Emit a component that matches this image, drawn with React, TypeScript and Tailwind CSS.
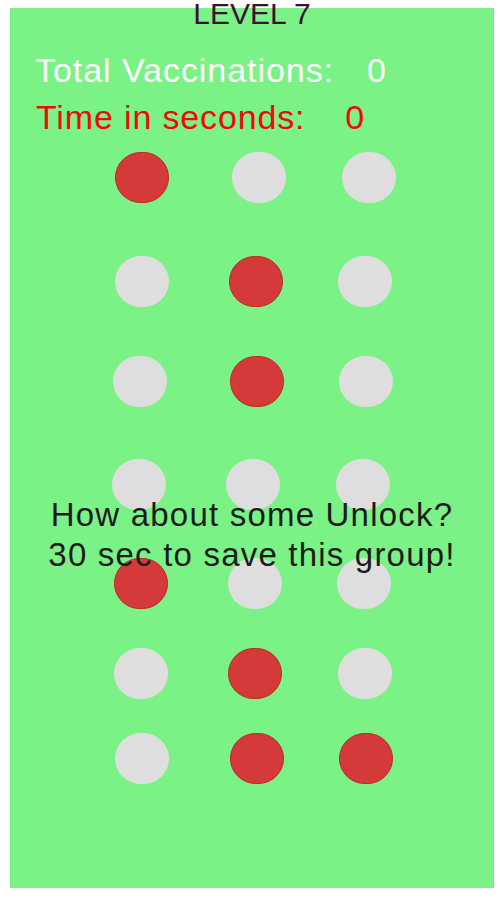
import React from "react";

type Cell = { ml: string; red: boolean };
type Row = { mt: string; cells: Cell[] };

const rows: Row[] = [
  { mt: "mt-[18px]", cells: [{ ml: "ml-[105px]", red: true }, { ml: "ml-[63px]", red: false }, { ml: "ml-[56px]", red: false }] },
  { mt: "mt-[53px]", cells: [{ ml: "ml-[105px]", red: false }, { ml: "ml-[60px]", red: true }, { ml: "ml-[55px]", red: false }] },
  { mt: "mt-[49px]", cells: [{ ml: "ml-[103px]", red: false }, { ml: "ml-[63px]", red: true }, { ml: "ml-[55px]", red: false }] },
  { mt: "mt-[52px]", cells: [{ ml: "ml-[102px]", red: false }, { ml: "ml-[60px]", red: false }, { ml: "ml-[56px]", red: false }] },
  { mt: "mt-[48px]", cells: [{ ml: "ml-[104px]", red: true }, { ml: "ml-[60px]", red: false }, { ml: "ml-[55px]", red: false }] },
  { mt: "mt-[39px]", cells: [{ ml: "ml-[104px]", red: false }, { ml: "ml-[60px]", red: true }, { ml: "ml-[56px]", red: false }] },
  { mt: "mt-[34px]", cells: [{ ml: "ml-[105px]", red: false }, { ml: "ml-[61px]", red: true }, { ml: "ml-[55px]", red: true }] },
];

export default function App() {
  return (
    <div
      className="w-[504px] h-[900px] bg-white pt-[8px] pl-[10px] overflow-hidden"
      style={{ fontFamily: '"Liberation Sans", Arial, sans-serif' }}
    >
      <div className="relative w-[484px] h-[880px] bg-[#7af286] flex flex-col">
        <div className="-mt-[8px] h-[28px] text-[30px] leading-[28px] text-center text-[#3a1238]">
          LEVEL 7
        </div>
        <div className="mt-[25px] ml-[25px] flex h-[34px] text-[34px] leading-[34px] text-white tracking-[0.95px]">
          <span>Total Vaccinations:</span>
          <span className="ml-[33px]">0</span>
        </div>
        <div className="mt-[13px] ml-[26px] flex h-[34px] text-[34px] leading-[34px] text-[#ee0a0a] tracking-[0.85px]">
          <span>Time in seconds:</span>
          <span className="ml-[40px]">0</span>
        </div>
        {rows.map((r, i) => (
          <div key={i} className={`flex ${r.mt}`}>
            {r.cells.map((c, j) => (
              <div
                key={j}
                className={`${c.ml} w-[54px] h-[51px] shrink-0 rounded-full ${
                  c.red ? "bg-[#d43a3a] border border-[#c42222]" : "bg-[#dedede]"
                }`}
              />
            ))}
          </div>
        ))}
        <div className="absolute left-0 right-0 top-[487px] text-center text-[33px] leading-[40px] tracking-[1.2px] text-[#1c1c1c]">
          <div>How about some Unlock?</div>
          <div>30 sec to save this group!</div>
        </div>
      </div>
    </div>
  );
}
